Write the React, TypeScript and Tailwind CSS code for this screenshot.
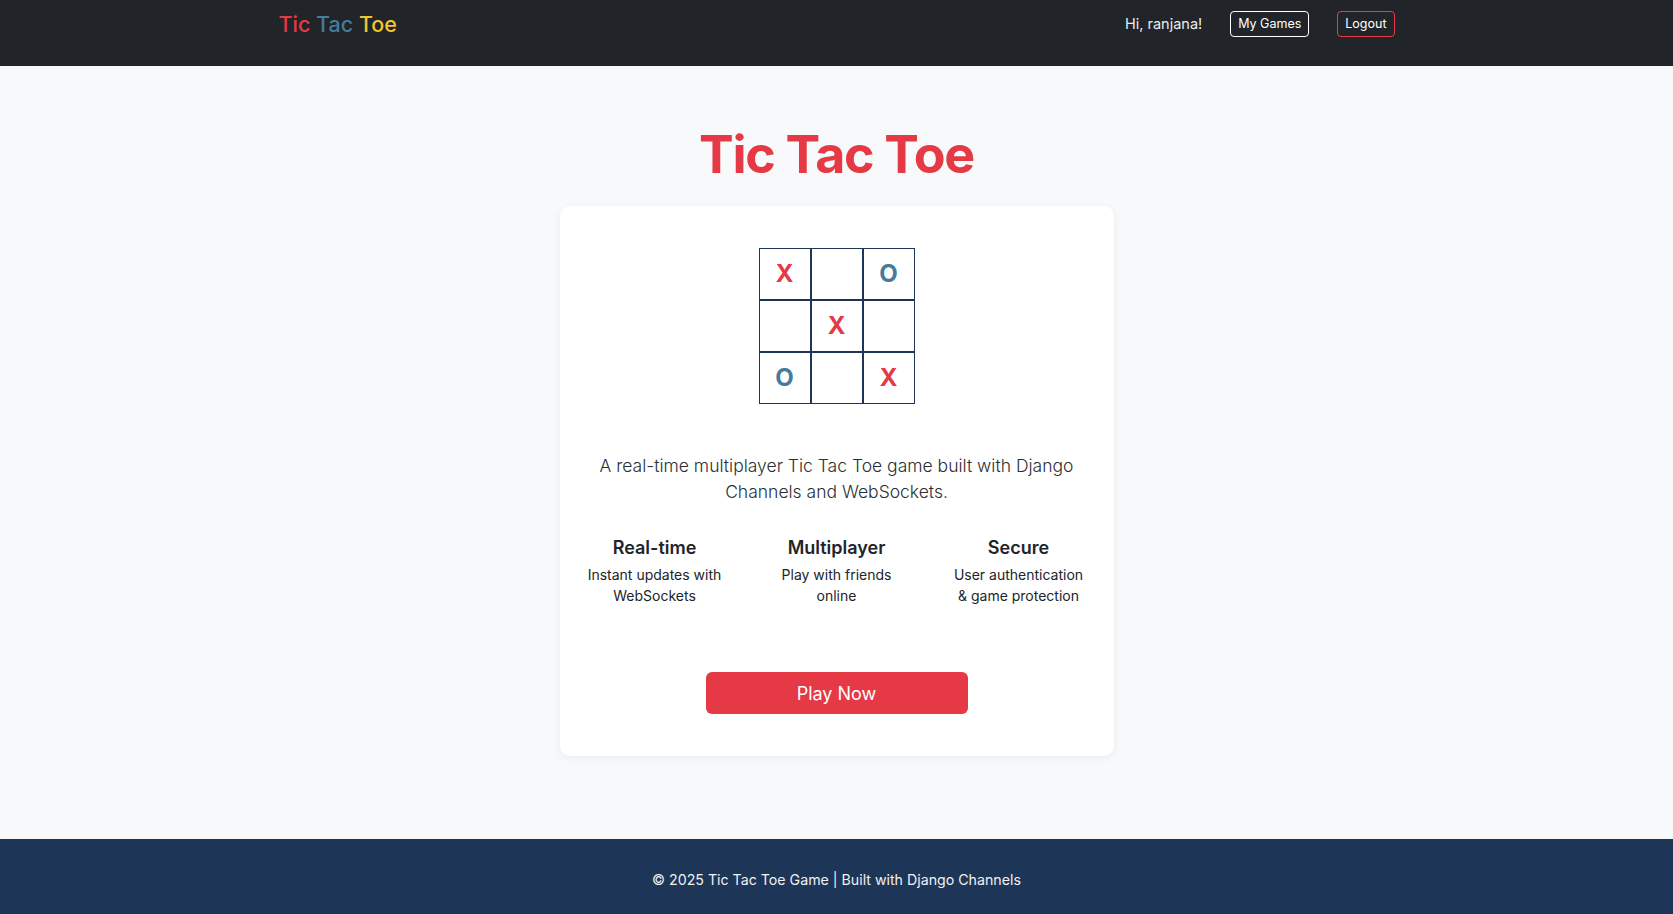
import React from "react";

const board = ["X", "", "O", "", "X", "", "O", "", "X"];

const features = [
  { title: "Real-time", text: "Instant updates with WebSockets" },
  { title: "Multiplayer", text: "Play with friends online" },
  { title: "Secure", text: "User authentication & game protection" },
];

export default function App() {
  return (
    <div className="flex min-h-screen flex-col bg-[#f8f9fa] font-['Inter',sans-serif] text-[#212529]">
      {/* navbar */}
      <header className="h-[66px] bg-[#212529]">
        <div className="mx-auto flex max-w-[1140px] items-start justify-between px-3 pt-[11px]">
          <a className="text-[21.5px] font-medium leading-[26px]">
            <span className="text-[#e63946]">Tic</span>{" "}
            <span className="text-[#457b9d]">Tac</span>{" "}
            <span className="text-[#f4c430]">Toe</span>
          </a>
          <nav className="flex items-center gap-[28px]">
            <span className="text-[14.5px] leading-[26px] text-[#e9ecef]">Hi, ranjana!</span>
            <button className="h-[26px] rounded-[4px] border border-white px-[7px] text-[12.5px] font-normal text-white">
              My Games
            </button>
            <button className="h-[26px] rounded-[4px] border border-[#e63946] px-[7px] text-[12.5px] font-normal text-white">
              Logout
            </button>
          </nav>
        </div>
      </header>

      <main className="flex flex-1 flex-col items-center pt-[58px]">
        <h1 className="text-[52px] font-bold leading-[62px] tracking-tight text-[#e63946]">Tic Tac Toe</h1>

        <div className="mt-[20px] w-[554px] rounded-[10px] bg-white px-6 pb-[42px] pt-[42px] shadow-[0_2px_8px_rgba(0,0,0,0.06)]">
          <div className="mx-auto grid w-[156px] grid-cols-3">
            {board.map((c, i) => (
              <div
                key={i}
                className={`flex h-[52px] w-[52px] items-center justify-center border border-[#1d3557] text-[24px] font-bold ${
                  c === "X" ? "text-[#e63946]" : "text-[#457b9d]"
                }`}
              >
                {c}
              </div>
            ))}
          </div>

          <p className="mt-[49px] text-center text-[17.5px] font-light leading-[26px] text-[#2b2f33]">
            A real-time multiplayer Tic Tac Toe game built with Django Channels and WebSockets.
          </p>

          <div className="-mx-[20px] mt-[32px] grid grid-cols-3">
            {features.map((f) => (
              <div key={f.title} className="px-[20px] text-center">
                <h3 className="text-[18px] font-semibold leading-[22px]">{f.title}</h3>
                <p className="mt-[5px] text-[14px] leading-[21px]">{f.text}</p>
              </div>
            ))}
          </div>

          <div className="mt-[66px] flex justify-center">
            <button className="h-[42px] w-[262px] rounded-[6px] bg-[#e63946] text-[18px] text-white">
              Play Now
            </button>
          </div>
        </div>
      </main>

      <footer className="flex h-[75px] items-start justify-center bg-[#1d3557] pt-[31px] text-[14.2px] leading-[20px] text-[#f1f1f1]">
        © 2025 Tic Tac Toe Game | Built with Django Channels
      </footer>
    </div>
  );
}
